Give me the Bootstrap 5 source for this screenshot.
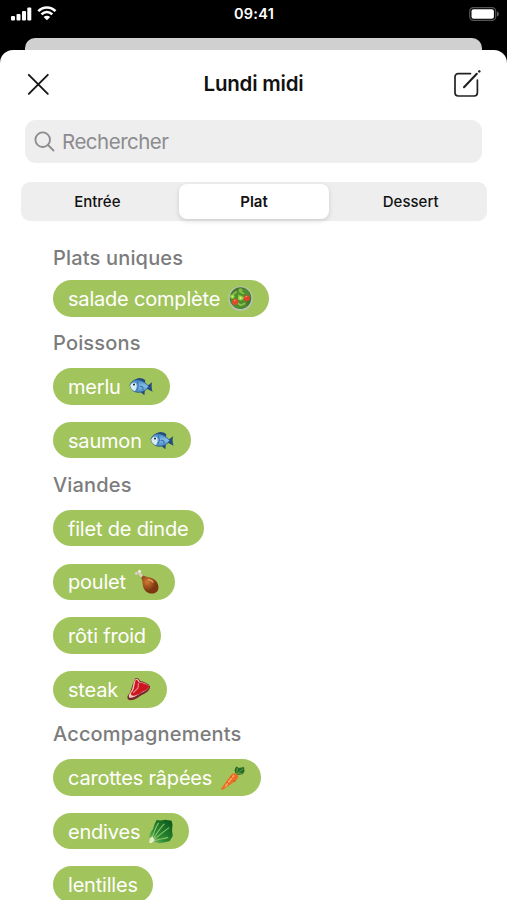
<!DOCTYPE html>
<html lang="fr">
<head>
<meta charset="utf-8">
<meta name="viewport" content="width=device-width, initial-scale=1">
<title>Lundi midi</title>
<link href="https://cdn.jsdelivr.net/npm/bootstrap@5.3.0/dist/css/bootstrap.min.css" rel="stylesheet">
<style>
html,body{height:900px;overflow:hidden}
body{background:#000;font-family:Inter,"Liberation Sans",sans-serif;color:#111}
.phone{width:507px;height:900px}
.status-bar{height:38px;padding:0 8px 10px 11px}
.clock{font-size:14.5px;font-weight:600;letter-spacing:.25px;line-height:28px;margin-right:2px}
.side{width:60px}
.back-sheet{height:12px;margin:0 25px;background:#d0d0d0;border-radius:10px 10px 0 0}
.sheet{height:850px;border-radius:13px 13px 0 0}
.sheet-head{height:70px;padding:0 26px 2px 26px}
.sheet-title{font-size:20.5px;font-weight:600;letter-spacing:-.2px;color:#111;padding:1px 0 0 3px}
.search-box{height:43px;margin:0 25px;padding-left:9px;background:#eee;border-radius:11px;color:#8c8c8f;font-size:20.5px;letter-spacing:-.5px;gap:7px}
.search-box span{padding-top:2px}
.segments{height:38.5px;margin:19px 20px 0 21px;padding:2px 1px;background:#eee;border-radius:9px;font-size:15px;font-weight:500;letter-spacing:0;gap:3px}
.segment{flex:1 1 0;color:#111;padding-top:1px}
.segment:first-child{padding-right:3px}
.segment:last-child{padding-left:3px}
.segment-on{border-radius:8px;font-weight:600;box-shadow:0 2px 5px rgba(0,0,0,.14)}
.dishes{padding:15px 0 0 53px}
.group-title{height:51.5px;padding-top:1.5px;font-size:20px;font-weight:500;letter-spacing:.17px;color:#7c7c7c}
.group-title:first-child{height:44.5px;padding-top:0}
.dish{height:36.6px;padding:0 16px 0 15px;background:#a2c45c;color:#fff;font-size:20px;letter-spacing:-.2px;gap:8px}
.dish span{padding-top:1px}
.dish span:last-child{margin-right:-.7px}
.dish + .dish{margin-top:17.1px}
.dish svg{width:25px;height:25px;flex:none}
</style>
</head>
<body>
<svg width="0" height="0" class="position-absolute">
<defs>
<radialGradient id="drum" cx=".35" cy=".35"><stop offset="0" stop-color="#d27a34"/><stop offset="1" stop-color="#7c3712"/></radialGradient>
<linearGradient id="scale" x1="0" y1="0" x2="0" y2="1"><stop offset="0" stop-color="#3f83bd"/><stop offset=".5" stop-color="#86bde8"/><stop offset="1" stop-color="#4687c0"/></linearGradient>
<linearGradient id="leaf" x1="0" y1="1" x2="1" y2="0"><stop offset="0" stop-color="#a5ce72"/><stop offset=".35" stop-color="#2f8d34"/><stop offset="1" stop-color="#075219"/></linearGradient>
<symbol id="salad" viewBox="0 0 26 26">
<circle cx="13" cy="13" r="12.700" fill="#b9c4b4"/><circle cx="13" cy="12.500" r="11.200" fill="#45752f"/>
<path d="M4 8l4-4 4 2 5-4 5 4 1 6-4 3 1 6-6 3-6-1-5-5z" fill="#4f8e2e"/>
<path d="M5 9l4-3M12 6l5 2M9 17l4 3 5-2M14 14l4-3M11 9l1 4" stroke="#8fbd4c" stroke-width="1.700" fill="none"/>
<circle cx="4.500" cy="11" r="2.500" fill="#8bc932"/><circle cx="13" cy="12.500" r="2.600" fill="#9ad43e"/><circle cx="13" cy="4.500" r="2.200" fill="#81b944"/>
<circle cx="4.500" cy="11" r="1" fill="#d7ef92"/><circle cx="13" cy="12.500" r="1" fill="#ddf2a5"/>
<circle cx="7.500" cy="16.500" r="3.200" fill="#e24a2b"/><circle cx="19.500" cy="12.800" r="3.100" fill="#e14228"/><path d="M6 15.500l2-1M18 11.500l2-1" stroke="#ff977c"/>
</symbol>
<symbol id="fish" viewBox="0 0 26 26">
<path d="M5.500 7C8 3.500 13 3.200 17 6.500L16 11zM11 18l5 4 .5-5zM18 13l6-4.500c-.7 3-.7 7 .6 10L18 15z" fill="#234c7c"/>
<path d="M1 11.500C3 6 8 4.800 13 7c4 2 6 4 7.500 6-3.500 5.500-9 7-14 5.500C3.500 17.500 1.500 15 1 11.500z" fill="url(#scale)" stroke="#245482" stroke-width=".8"/>
<path d="M1.200 12C3 8.500 6.500 8 7.500 11s-.5 5.500-1.500 7c-2.800-1.200-4.300-3-4.800-6z" fill="#d6e9f5"/>
<path d="M8.500 8c2 3 1.200 6-.5 9M11 13c3-1 4 1 3.500 3.500" stroke="#3472aa" stroke-width="1.200" fill="none"/>
<circle cx="5.300" cy="11" r="1.700" fill="#fff"/><circle cx="5.200" cy="11" r="1.100" fill="#152633"/>
</symbol>
<symbol id="drumstick" viewBox="0 0 26 26">
<path d="M9.500 9L5.500 4.500" stroke="#ded1c3" stroke-width="2.600"/><circle cx="2.600" cy="4.500" r="1.700" fill="#d8cec6"/><circle cx="5.700" cy="2.500" r="1.700" fill="#eee8df"/>
<path d="M7.500 9l2-2.300c2 .8 3.500 1.500 6 1.800 5.500.8 9.800 5 10 10.500 0 4-2.500 6.500-6.500 6.500-6 .2-9.500-4.500-10-10-.2-2.500-.7-4.500-1.500-6.500z" fill="url(#drum)"/>
<path d="M14.500 11c2.500 0 4.500 1.500 5.500 3" stroke="#eba268" stroke-width="1.300" fill="none"/>
</symbol>
<symbol id="steak" viewBox="0 0 26 26">
<path d="M9.500 1.500c2-1 4 0 5 2.500 3 1 9 2.500 10.500 6 0 5-5 7-9 9-4 2.500-7.500 5.800-13 5-2-1.500-2-4-.5-5.500 3.500-4 3-9 5.500-13z" fill="#79252c"/>
<path d="M10 2c2-1 3.500 1 4 3 3 .7 8.500 2 10 5-1 4-5 5-9 7-4 2.500-7 5.200-11.500 4.500C2 19 4 17 5.500 14.500 7.500 11 7 6 10 2z" fill="#f0c9b9"/>
<path d="M10 3c1.500-.5 2.500 1 3 2.500 3 .5 9.500 2 11 4.500-1 3.500-5 4.500-8.500 6.300-3.500 2-6 3.500-9.500 3L5 17.500C6.500 15 8 14 8.500 10z" fill="#cb1620"/>
<path d="M13 6.500l-.5 5-5 5" stroke="#ed8580" stroke-width="1.300" fill="none"/>
</symbol>
<symbol id="carrot" viewBox="0 0 26 26">
<path d="M16.500 9c-2-3-1.500-6 1-7.500l2 1.500 5.500-.8.500 4.500-2 3-5 .8z" fill="#286b29"/><path d="M17.500 9l.5-6M18 9l6-5M18 9l5 0" stroke="#64a144" stroke-width="1"/>
<path d="M12 9.500c2.500-2 6.500-.5 7 2 .2 2-1 3.500-3 5.200L2.500 26c-1 .2-1.500-.6-1.200-1.500z" fill="#ee6d25"/>
<path d="M14.500 10.500l-9 12" stroke="#ffad6b" stroke-width="1.400"/><path d="M11 12l2 1.500M14 16.500l2 .5M7.500 18l2 1.500" stroke="#b84b15" stroke-width=".9"/>
</symbol>
<symbol id="greens" viewBox="0 0 26 26">
<path d="M1 23c0-5 1-9 4-12l2-6 2-4 4 .5 5-.7 6.500 1 1 4-.5 6 .7 6-3 5-5 1.500-6 1-5-1.500-3 1z" fill="url(#leaf)"/>
<path d="M3 24C5 17 7 10 11 4M3 24c4-5 7-12 14-19M3 24c5-4 12-10 19-15M3 24c6-3 13-3 18-5" stroke="#8cc46a" stroke-width="1.100" fill="none"/>
<path d="M1 25l1-5 2.500-2 2.500 4-3 3z" fill="#e3ecc3"/>
</symbol>
</defs>
</svg>
<main class="phone d-flex flex-column overflow-hidden">
<div class="status-bar d-flex justify-content-between align-items-center text-white">
<div class="side d-flex align-items-center">
<svg width="46" height="16" viewBox="0 1 46 16" fill="none"><g fill="#fff"><rect y="11" width="4" height="4.500" rx="1"/><rect x="5.500" y="9" width="4" height="6.500" rx="1"/><rect x="11" y="6" width="4" height="9.500" rx="1"/><rect x="16.300" y="2.500" width="4" height="13" rx="1"/></g><g stroke="#fff" stroke-width="2.600"><path d="M27.300 6.200c4.900-5 12.300-5 17.200 0M30.500 9.400c3.300-3.200 7.500-3.200 10.800 0"/></g><path d="M32.600 11.900c2-1.700 4.600-1.700 6.600 0L35.900 15.200z" fill="#fff"/></svg>
</div>
<div class="clock">09:41</div>
<div class="side d-flex justify-content-end">
<svg width="30" height="14" viewBox="0 0 30 14"><rect x=".7" y=".7" width="26" height="12.600" rx="3.600" fill="none" stroke="#555" stroke-width="1.200"/><rect x="2.500" y="2.200" width="22.400" height="9.600" rx="2" fill="#fff"/><path d="M28.200 4.500c2 1 2 4 0 5z" fill="#777"/></svg>
</div>
</div>
<div class="back-sheet"></div>
<section class="sheet bg-white">
<header class="sheet-head d-flex justify-content-between align-items-center">
<svg width="25" height="25" viewBox="0 0 25 25" fill="none" stroke="#161616" stroke-width="1.900" stroke-linecap="round"><path d="M2.800 2.800L21.800 21.800M21.800 2.800L2.800 21.800"/></svg>
<h1 class="sheet-title m-0">Lundi midi</h1>
<svg width="28" height="28" viewBox="0 0 28 28" fill="none" stroke="#222" stroke-width="1.700" stroke-linecap="round"><path d="M17.500 3.600H5.200A3.200 3.200 0 0 0 2 6.800v16A3.200 3.200 0 0 0 5.200 26h16a3.200 3.200 0 0 0 3.200-3.200V10"/><path d="M11 17.200L23.800 3.800" stroke-width="2.100"/><path d="M26.200 1.500l.2-.2" stroke-width="2.400"/></svg>
</header>
<div class="search-box d-flex align-items-center">
<svg width="21" height="21" viewBox="0 0 21 21" fill="none" stroke="currentColor" stroke-width="1.800" stroke-linecap="round"><circle cx="8.700" cy="8.700" r="7.300"/><path d="M14 14l5.500 5.500"/></svg>
<span>Rechercher</span>
</div>
<nav class="segments d-flex">
<div class="segment d-flex align-items-center justify-content-center"><span>Entrée</span></div>
<div class="segment segment-on bg-white d-flex align-items-center justify-content-center"><span>Plat</span></div>
<div class="segment d-flex align-items-center justify-content-center"><span>Dessert</span></div>
</nav>
<div class="dishes d-flex flex-column align-items-start">
<h2 class="group-title d-flex align-items-center m-0">Plats uniques</h2>
<div class="dish rounded-pill d-inline-flex align-items-center"><span>salade complète</span><svg><use href="#salad"/></svg></div>
<h2 class="group-title d-flex align-items-center m-0">Poissons</h2>
<div class="dish rounded-pill d-inline-flex align-items-center"><span>merlu</span><svg><use href="#fish"/></svg></div>
<div class="dish rounded-pill d-inline-flex align-items-center"><span>saumon</span><svg><use href="#fish"/></svg></div>
<h2 class="group-title d-flex align-items-center m-0">Viandes</h2>
<div class="dish rounded-pill d-inline-flex align-items-center"><span>filet de dinde</span></div>
<div class="dish rounded-pill d-inline-flex align-items-center"><span>poulet</span><svg><use href="#drumstick"/></svg></div>
<div class="dish rounded-pill d-inline-flex align-items-center"><span>rôti froid</span></div>
<div class="dish rounded-pill d-inline-flex align-items-center"><span>steak</span><svg><use href="#steak"/></svg></div>
<h2 class="group-title d-flex align-items-center m-0">Accompagnements</h2>
<div class="dish rounded-pill d-inline-flex align-items-center"><span>carottes râpées</span><svg><use href="#carrot"/></svg></div>
<div class="dish rounded-pill d-inline-flex align-items-center"><span>endives</span><svg><use href="#greens"/></svg></div>
<div class="dish rounded-pill d-inline-flex align-items-center"><span>lentilles</span></div>
</div>
</section>
</main>
<script src="https://cdn.jsdelivr.net/npm/bootstrap@5.3.0/dist/js/bootstrap.bundle.min.js"></script>
</body>
</html>
